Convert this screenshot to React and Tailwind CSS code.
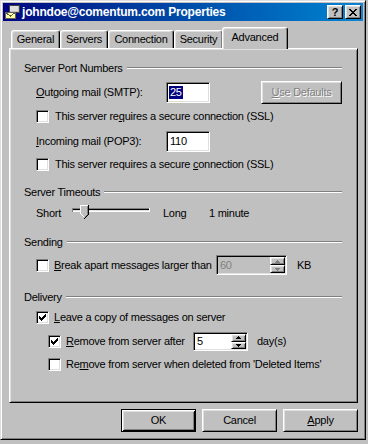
import React from "react";

const sunk =
  "border border-t-[#808080] border-l-[#808080] border-r-white border-b-white shadow-[inset_1px_1px_0_#000,inset_-1px_-1px_0_#dfdfdf]";
const raised =
  "border border-t-white border-l-white border-r-black border-b-black shadow-[inset_1px_1px_0_#dfdfdf,inset_-1px_-1px_0_#808080]";

const CHECK = [
  [6, 0],
  [5, 1], [6, 1],
  [0, 2], [4, 2], [5, 2], [6, 2],
  [0, 3], [1, 3], [3, 3], [4, 3], [5, 3],
  [0, 4], [1, 4], [2, 4], [3, 4], [4, 4],
  [1, 5], [2, 5], [3, 5],
  [2, 6],
];

function Check({ checked }) {
  return (
    <span className={`w-[13px] h-[13px] box-border bg-white ${sunk} flex items-center justify-center shrink-0`}>
      {checked && (
        <svg width="7" height="7" viewBox="0 0 7 7" shapeRendering="crispEdges">
          {CHECK.map(([x, y]) => (
            <rect key={`${x}-${y}`} x={x} y={y} width="1" height="1" fill="#000" />
          ))}
        </svg>
      )}
    </span>
  );
}

function U({ children }) {
  return <span className="underline underline-offset-[1px] decoration-[1px]">{children}</span>;
}

function Group({ title }) {
  return (
    <div className="flex items-center h-[14px]">
      <span>{title}</span>
      <div className="flex-1 ml-[4px] h-[2px] border-t border-t-[#808080] border-b border-b-white" />
    </div>
  );
}

function Arrow({ up, color }) {
  return (
    <svg width="5" height="3" viewBox="0 0 5 3" shapeRendering="crispEdges">
      {up ? (
        <>
          <rect x="2" y="0" width="1" height="1" fill={color} />
          <rect x="1" y="1" width="3" height="1" fill={color} />
          <rect x="0" y="2" width="5" height="1" fill={color} />
        </>
      ) : (
        <>
          <rect x="0" y="0" width="5" height="1" fill={color} />
          <rect x="1" y="1" width="3" height="1" fill={color} />
          <rect x="2" y="2" width="1" height="1" fill={color} />
        </>
      )}
    </svg>
  );
}

function Spin({ value, disabled, w, h }) {
  const arrow = disabled ? "#808080" : "#000";
  return (
    <div className={`flex box-border ${w} ${h} ${sunk} ${disabled ? "bg-[#c0c0c0]" : "bg-white"}`}>
      <span className={`flex-1 flex items-center pl-[3px] ${disabled ? "text-[#808080]" : "text-black"}`}>{value}</span>
      <div className="flex flex-col w-[15px] my-[1px] mr-[1px]">
        <div className={`flex-1 box-border bg-[#c0c0c0] ${raised} flex items-center justify-center`}>
          <Arrow up color={arrow} />
        </div>
        <div className={`flex-1 box-border bg-[#c0c0c0] ${raised} flex items-center justify-center`}>
          <Arrow color={arrow} />
        </div>
      </div>
    </div>
  );
}

function Tab({ label, w, selected }) {
  return (
    <div
      className={`${w} box-border flex items-center justify-center border-t border-l border-r border-t-white border-l-white border-r-black rounded-t-[3px] bg-[#c0c0c0] shadow-[inset_-1px_0_0_#808080,inset_1px_1px_0_#dfdfdf] ${
        selected ? "h-[22px] -mb-[1px] relative z-10 -ml-[1px] pb-[3px]" : "h-[18px]"
      }`}
    >
      {label}
    </div>
  );
}

function Btn({ children, def, w = "w-[75px]" }) {
  return (
    <div
      className={`${w} h-[23px] box-border flex items-center justify-center bg-[#c0c0c0] ${
        def
          ? "border border-black shadow-[inset_1px_1px_0_#fff,inset_-1px_-1px_0_#000,inset_2px_2px_0_#dfdfdf,inset_-2px_-2px_0_#808080]"
          : raised
      }`}
    >
      {children}
    </div>
  );
}

export default function App() {
  return (
    <div
      className="w-[368px] h-[444px] bg-[#c0c0c0] overflow-hidden text-[11px] leading-none text-black tracking-[-0.25px]"
      style={{ fontFamily: '"Liberation Sans", Arial, sans-serif' }}
    >
      <div className="w-[366px] h-[440px] box-border border border-t-[#dfdfdf] border-l-[#dfdfdf] border-r-black border-b-black shadow-[inset_1px_1px_0_#fff,inset_-1px_-1px_0_#808080] p-[2px] flex flex-col">
        {/* Title bar */}
        <div className="h-[18px] flex items-center bg-gradient-to-r from-[#000080] to-[#1084d0] pl-[1px] pr-[2px]">
          <svg width="16" height="16" viewBox="0 0 16 16" shapeRendering="crispEdges">
            <rect x="5" y="1" width="10" height="7" fill="#c0c0c0" stroke="#404040" />
            <rect x="6" y="2" width="8" height="5" fill="#e0e0e0" />
            <rect x="1.5" y="8.5" width="10" height="6" fill="#ffff99" stroke="#606060" />
            <path d="M1.5 8.5 L6.5 12 L11.5 8.5" stroke="#606060" fill="none" />
          </svg>
          <span className="ml-[2px] text-white font-bold text-[12px] tracking-[-0.2px]">johndoe@comentum.com Properties</span>
          <div className="ml-auto flex gap-[2px]">
            <div className={`w-[16px] h-[14px] box-border bg-[#c0c0c0] ${raised} flex items-center justify-center font-bold text-[11px] tracking-normal`}>
              ?
            </div>
            <div className={`w-[16px] h-[14px] box-border bg-[#c0c0c0] ${raised} flex items-center justify-center`}>
              <svg width="8" height="7" viewBox="0 0 8 7" shapeRendering="crispEdges">
                <path d="M0 0h2v1H0zM6 0h2v1H6zM1 1h2v1H1zM5 1h2v1H5zM2 2h4v1H2zM3 3h2v1H3zM2 4h4v1H2zM1 5h2v1H1zM5 5h2v1H5zM0 6h2v1H0zM6 6h2v1H6z" fill="#000" />
              </svg>
            </div>
          </div>
        </div>

        {/* Tabs */}
        <div className="mt-[6px] ml-[8px] h-[21px] flex items-end">
          <Tab label="General" w="w-[49px]" />
          <Tab label="Servers" w="w-[48px]" />
          <Tab label="Connection" w="w-[66px]" />
          <Tab label="Security" w="w-[49px]" />
          <Tab label="Advanced" w="w-[66px]" selected />
        </div>

        {/* Panel */}
        <div className="ml-[6px] w-[349px] h-[355px] box-border border border-t-white border-l-white border-r-black border-b-black shadow-[inset_1px_1px_0_#dfdfdf,inset_-1px_-1px_0_#808080] pl-[14px] pr-[15px] flex flex-col">
          <div className="mt-[12px]">
            <Group title="Server Port Numbers" />
          </div>

          <div className="mt-[7px] h-[21px] flex items-center pl-[12px]">
            <span className="w-[130px]">
              <U>O</U>utgoing mail (SMTP):
            </span>
            <div className={`w-[44px] h-[21px] box-border bg-white ${sunk} flex items-center pl-[2px]`}>
              <span className="bg-[#000080] text-white px-[1px] h-[13px] flex items-center">25</span>
            </div>
            <div className={`ml-auto w-[81px] h-[23px] box-border bg-[#c0c0c0] ${raised} flex items-center justify-center text-[#808080] [text-shadow:1px_1px_0_#fff]`}>
              <U>U</U>se Defaults
            </div>
          </div>

          <div className="mt-[7px] h-[13px] flex items-center pl-[12px]">
            <Check />
            <span className="ml-[6px]">
              This server re<U>q</U>uires a secure connection (SSL)
            </span>
          </div>

          <div className="mt-[8px] h-[21px] flex items-center pl-[12px]">
            <span className="w-[130px]">
              <U>I</U>ncoming mail (POP3):
            </span>
            <div className={`w-[44px] h-[21px] box-border bg-white ${sunk} flex items-center pl-[3px]`}>110</div>
          </div>

          <div className="mt-[6px] h-[13px] flex items-center pl-[12px]">
            <Check />
            <span className="ml-[6px]">
              This server requires a secure <U>c</U>onnection (SSL)
            </span>
          </div>

          <div className="mt-[14px]">
            <Group title="Server Timeouts" />
          </div>

          <div className="mt-[4px] h-[20px] flex items-center pl-[12px]">
            <span className="w-[35px]">Short</span>
            <svg width="80" height="20" viewBox="0 0 80 20" shapeRendering="crispEdges">
              <rect x="1" y="5" width="78" height="1" fill="#808080" />
              <rect x="1" y="6" width="78" height="1" fill="#000" />
              <rect x="1" y="7" width="78" height="1" fill="#dfdfdf" />
              <rect x="1" y="8" width="78" height="1" fill="#fff" />
              <rect x="1" y="5" width="1" height="4" fill="#808080" />
              <rect x="78" y="5" width="1" height="4" fill="#fff" />
              <polygon points="9,2 17,2 17,11 13,15 9,11" fill="#c0c0c0" />
              <path d="M9 2h8v1H9zM9 3h1v8H9zM10 11h1v1h-1zM11 12h1v1h-1zM12 13h1v1h-1z" fill="#fff" />
              <path d="M17 2h1v10h-1zM16 12h1v1h-1zM15 13h1v1h-1zM14 14h1v1h-1zM13 15h1v1h-1z" fill="#000" />
              <path d="M16 3h1v9h-1zM15 12h1v1h-1zM14 13h1v1h-1z" fill="#808080" />
            </svg>
            <span className="ml-[12px] w-[46px]">Long</span>
            <span>1 minute</span>
          </div>

          <div className="mt-[12px]">
            <Group title="Sending" />
          </div>

          <div className="mt-[6px] h-[20px] flex items-center pl-[12px]">
            <Check />
            <span className="ml-[5px] w-[162px]">
              <U>B</U>reak apart messages larger than
            </span>
            <Spin value="60" disabled w="w-[71px]" h="h-[20px]" />
            <span className="ml-[10px]">KB</span>
          </div>

          <div className="mt-[15px]">
            <Group title="Delivery" />
          </div>

          <div className="mt-[7px] h-[13px] flex items-center pl-[12px]">
            <Check checked />
            <span className="ml-[5px]">
              <U>L</U>eave a copy of messages on server
            </span>
          </div>

          <div className="mt-[8px] h-[19px] flex items-center pl-[24px]">
            <Check checked />
            <span className="ml-[5px] w-[127px]">
              <U>R</U>emove from server after
            </span>
            <Spin value="5" w="w-[55px]" h="h-[19px]" />
            <span className="ml-[9px]">day(s)</span>
          </div>

          <div className="mt-[7px] h-[13px] flex items-center pl-[24px]">
            <Check />
            <span className="ml-[5px]">
              Re<U>m</U>ove from server when deleted from 'Deleted Items'
            </span>
          </div>
        </div>

        {/* Buttons */}
        <div className="ml-[6px] w-[349px] mt-[6px] flex justify-end gap-[6px]">
          <Btn def>OK</Btn>
          <Btn>Cancel</Btn>
          <Btn>
            <span>
              <U>A</U>pply
            </span>
          </Btn>
        </div>
      </div>
    </div>
  );
}
